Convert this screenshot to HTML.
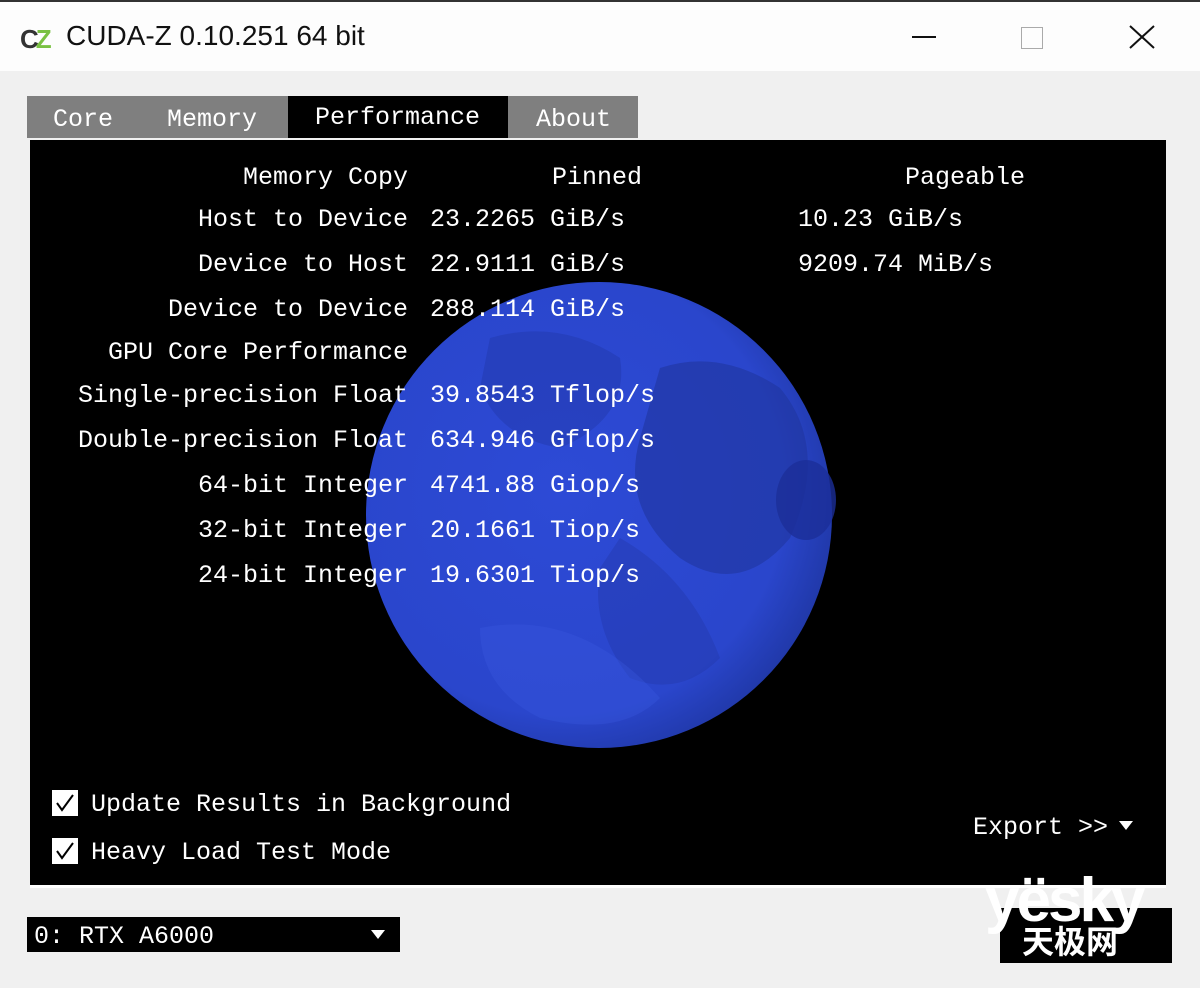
<!DOCTYPE html>
<html><head><meta charset="utf-8"><style>
*{margin:0;padding:0;box-sizing:border-box}
body{width:1200px;height:988px;background:#f0f0f0;position:relative;overflow:hidden;font-family:"Liberation Mono","DejaVu Sans Mono",monospace}
.t{position:absolute;white-space:pre;font-size:25px;line-height:30px;color:#fff;font-family:"Liberation Mono",monospace;margin-top:2px}
.r{text-align:right}
#title{position:absolute;left:0;top:0;width:1200px;height:71px;background:#fdfdfd;border-top:2px solid #333}
.tab{position:absolute;top:96px;height:42px;color:#fff;font-size:25px;line-height:48px;font-family:"Liberation Mono",monospace}
</style></head><body>
<div id="title">
 <div style="position:absolute;left:20px;top:22px;font:bold 26px 'Liberation Sans',sans-serif;color:#333;letter-spacing:-3px">C<span style="color:#7ac143">Z</span></div>
 <div style="position:absolute;left:66px;top:18px;font:28px 'Liberation Sans',sans-serif;color:#111">CUDA-Z 0.10.251 64 bit</div>
 <div style="position:absolute;left:912px;top:34px;width:24px;height:2px;background:#111"></div>
 <div style="position:absolute;left:1021px;top:25px;width:22px;height:22px;border:1px solid #aaa"></div>
 <svg style="position:absolute;left:1128px;top:22px" width="28" height="26"><path d="M2 2L26 24M26 2L2 24" stroke="#111" stroke-width="2"/></svg>
</div>
<div class="tab" style="left:27px;width:261px;background:#7f7f7f"><span style="position:absolute;left:26px">Core</span><span style="position:absolute;left:140px">Memory</span></div>
<div class="tab" style="left:288px;width:220px;background:#000;padding-left:27px;line-height:44px">Performance</div>
<div class="tab" style="left:508px;width:130px;background:#7f7f7f;padding-left:28px">About</div>
<div style="position:absolute;left:30px;top:140px;width:1136px;height:748px;background:#000;border-bottom:3px solid #fff"></div>
<svg style="position:absolute;left:360px;top:278px" width="480" height="480">
 <defs><radialGradient id="g" cx="0.42" cy="0.45" r="0.6"><stop offset="0" stop-color="#2d4ad6"/><stop offset="0.8" stop-color="#2a46cc"/><stop offset="1" stop-color="#2038a8"/></radialGradient></defs>
 <circle cx="239" cy="237" r="233" fill="url(#g)"/>
 <path d="M300 90 Q360 70 420 110 Q470 170 430 260 Q380 320 320 280 Q260 230 280 160Z" fill="#20359e" opacity="0.6"/>
 <path d="M130 60 Q200 40 260 80 Q270 140 200 170 Q140 160 120 110Z" fill="#2238a8" opacity="0.45"/>
 <ellipse cx="446" cy="222" rx="30" ry="40" fill="#1c2e98" opacity="0.8"/>
 <path d="M260 260 Q330 300 360 380 Q320 420 270 400 Q230 350 240 290Z" fill="#2238a8" opacity="0.4"/>
 <path d="M120 350 Q220 330 300 420 Q260 460 180 440 Q120 410 120 350Z" fill="#3a58e0" opacity="0.35"/>
</svg>
<div class="t r" style="left:30px;width:378px;top:161px">Memory Copy</div>
<div class="t" style="left:552px;top:161px">Pinned</div>
<div class="t" style="left:905px;top:161px">Pageable</div>
<div class="t r" style="left:30px;width:378px;top:203px">Host to Device</div>
<div class="t" style="left:430px;top:203px">23.2265 GiB/s</div>
<div class="t" style="left:798px;top:203px">10.23 GiB/s</div>
<div class="t r" style="left:30px;width:378px;top:248px">Device to Host</div>
<div class="t" style="left:430px;top:248px">22.9111 GiB/s</div>
<div class="t" style="left:798px;top:248px">9209.74 MiB/s</div>
<div class="t r" style="left:30px;width:378px;top:293px">Device to Device</div>
<div class="t" style="left:430px;top:293px">288.114 GiB/s</div>
<div class="t r" style="left:30px;width:378px;top:336px">GPU Core Performance</div>
<div class="t r" style="left:30px;width:378px;top:379px">Single-precision Float</div>
<div class="t" style="left:430px;top:379px">39.8543 Tflop/s</div>
<div class="t r" style="left:30px;width:378px;top:424px">Double-precision Float</div>
<div class="t" style="left:430px;top:424px">634.946 Gflop/s</div>
<div class="t r" style="left:30px;width:378px;top:469px">64-bit Integer</div>
<div class="t" style="left:430px;top:469px">4741.88 Giop/s</div>
<div class="t r" style="left:30px;width:378px;top:514px">32-bit Integer</div>
<div class="t" style="left:430px;top:514px">20.1661 Tiop/s</div>
<div class="t r" style="left:30px;width:378px;top:559px">24-bit Integer</div>
<div class="t" style="left:430px;top:559px">19.6301 Tiop/s</div>
<div style="position:absolute;left:52px;top:790px;width:26px;height:26px;background:#fff"><svg width="26" height="26"><path d="M5 13L10 20L21 5" stroke="#000" stroke-width="2" fill="none"/></svg></div>
<div class="t" style="left:91px;top:788px">Update Results in Background</div>
<div style="position:absolute;left:52px;top:838px;width:26px;height:26px;background:#fff"><svg width="26" height="26"><path d="M5 13L10 20L21 5" stroke="#000" stroke-width="2" fill="none"/></svg></div>
<div class="t" style="left:91px;top:836px">Heavy Load Test Mode</div>
<div class="t" style="left:973px;top:811px">Export &gt;&gt;</div>
<svg style="position:absolute;left:1119px;top:821px" width="14" height="10"><path d="M0 0H14L7 9Z" fill="#fff"/></svg>
<div style="position:absolute;left:27px;top:917px;width:373px;height:35px;background:#000"></div>
<div class="t" style="left:34px;top:920px">0: RTX A6000</div>
<svg style="position:absolute;left:371px;top:930px" width="14" height="10"><path d="M0 0H14L7 9Z" fill="#fff"/></svg>
<div style="position:absolute;left:1000px;top:908px;width:172px;height:55px;background:#000"></div>
<div style="position:absolute;left:985px;top:870px;font:bold 62px 'Liberation Sans',sans-serif;color:#fff;letter-spacing:-3px;line-height:62px">yësky</div>
<div style="position:absolute;left:1022px;top:922px;font:bold 32px 'Noto Sans CJK SC',sans-serif;color:#fff;line-height:36px">天极网</div>
</body></html>
